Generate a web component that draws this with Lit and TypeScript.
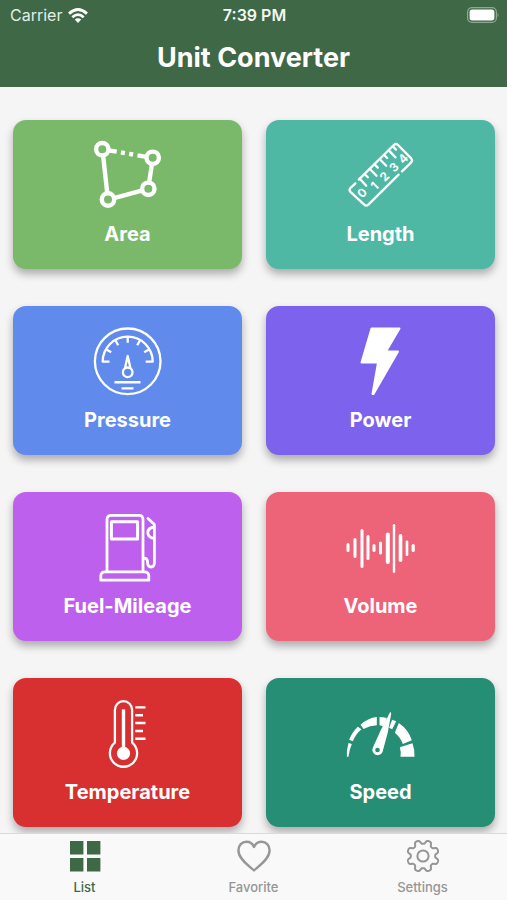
import { LitElement, html, css, svg } from "lit";
import type { SVGTemplateResult } from "lit";
import { customElement, property, state } from "lit/decorators.js";
import { classMap } from "lit/directives/class-map.js";

type Unit = { id: string; label: string; icon: SVGTemplateResult };

// Sound-wave bars: centre x, top, bottom, width.
const bars = [
  [1, 30, 39, 3], [8, 25, 45, 3], [15, 16, 55, 3], [21, 22, 47, 3],
  [27, 31, 39, 3], [33.5, 28.5, 41.5, 3], [40.8, 19.5, 51, 4], [47, 11, 60, 2.4],
  [53.5, 21, 49, 3.6], [60, 27.5, 43, 2.6], [66.2, 31, 39, 3.2],
];

const gearPath = (() => {
  const pts: string[] = [];
  for (let i = 0; i < 160; i++) {
    const a = (i / 160) * Math.PI * 2;
    const r = 14 + 2 * Math.tanh(1.8 * (0.1 - Math.cos(8 * a)));
    pts.push(`${(17 + r * Math.sin(a)).toFixed(2)} ${(17 - r * Math.cos(a)).toFixed(2)}`);
  }
  return `M${pts.join("L")}Z`;
})();

const gaugeTicks = [30, 60, 90, 120, 150].map((d) => {
  const a = (d * Math.PI) / 180;
  const at = (r: number) => `${(33.7 - r * Math.cos(a)).toFixed(1)} ${(34.7 - r * Math.sin(a)).toFixed(1)}`;
  return `M${at(25)}L${at(19)}`;
}).join("");

const units: Unit[] = [
  {
    id: "area", label: "Area",
    icon: svg`<g fill="none" stroke="#fff" stroke-width="4.4">
      <circle cx="8.3" cy="8.2" r="6.2"/><circle cx="58.700" cy="16.8" r="6.2"/>
      <circle cx="54.3" cy="47.8" r="6.2"/><circle cx="14" cy="58.5" r="6.2"/>
      <path d="M9.1 14.500L13.300 52.500M58 23L55.100 41.500M20 57.100L48.500 49.300"/>
      <path d="M14.500 9.300L22.700 10.700M26.900 11.400L30.900 12.100M35.100 12.800L39.100 13.500M43.500 14.300L52.500 15.800"/></g>`,
  },
  {
    id: "length", label: "Length",
    icon: svg`<g fill="none" stroke="#fff" stroke-width="2.3" stroke-linecap="round" stroke-linejoin="round">
      <path d="M11.8 38.6L46.8 4Q49 2 51 4L64.2 17.4Q66 19.6 64 21.6L55 30.4M51.6 33.6L21.4 63.6Q19.2 65.6 17.2 63.6L3.4 50.8Q1.6 48.8 3.6 46.8L8.4 42.4"/>
      <path d="M12.8 37.8L19.2 44.7M22.8 28L29.5 34.7M32.8 18.2L39.2 24.7M41.8 9.4L48.5 16.4"/>
      <path d="M17.6 33L20.8 36.2M27.6 23.4L30.8 26.6M37.2 14L40.2 17M46 5.4L49 8.6"/></g>
      <g class="digits" fill="#fff" text-anchor="middle">
      <text transform="translate(18 55) rotate(-45)">0</text>
      <text transform="translate(30.6 48) rotate(-45)">1</text>
      <text transform="translate(40.4 38.600) rotate(-45)">2</text>
      <text transform="translate(50 29.2) rotate(-45)">3</text>
      <text transform="translate(59 20.6) rotate(-45)">4</text></g>`,
  },
  {
    id: "pressure", label: "Pressure",
    icon: svg`<g fill="none" stroke="#fff" stroke-width="2.3" stroke-linejoin="round">
      <circle cx="33.7" cy="34.3" r="32.8"/>
      <path d="M15.500 34.7H8.700A25 25 0 0 1 58.700 34.7H51.700"/><path d="${gaugeTicks}"/>
      <circle cx="33.7" cy="45.3" r="4.8"/><path d="M31 41L33.700 29L36.400 41"/>
      <path d="M20.500 55.3H46.500M27.500 61.4H39.500" stroke-width="2.4"/></g>`,
  },
  {
    id: "power", label: "Power",
    icon: svg`<path fill="#fff" stroke="#fff" stroke-width="2" stroke-linejoin="round"
      d="M24.500 1.6H52.500L39 24.600H51L26.500 67H25.500L31 35.600H14.500Z"/>`,
  },
  {
    id: "fuel", label: "Fuel-Mileage",
    icon: svg`<g fill="none" stroke="#fff" stroke-width="2.8" stroke-linejoin="round" stroke-linecap="round">
      <path d="M13 58V6.6Q13 2.4 17.2 2.4H45Q49 2.4 49 6.6V58"/>
      <path d="M17.4 8.8H43.6V26H17.4Z" stroke-width="3"/>
      <path d="M6.8 67.2V63Q6.8 58.8 11.2 58.8H50.2Q54.8 58.8 54.8 63V67.2Z"/>
      <path d="M54 5.4L60.4 11.4V49.6Q60.4 54 57 54Q53.600 54 53.600 49.6Q53.600 45.2 50 45.2"/>
      <path d="M60 14Q53.800 15 53.800 19.6Q53.800 24.6 60 25.4"/></g>`,
  },
  {
    id: "volume", label: "Volume",
    icon: svg`${bars.map(([x, top, bottom, w]) => svg`<rect x=${x - w / 2} y=${top} width=${w}
      height=${bottom - top} rx=${w / 2} fill="#fff"/>`)}`,
  },
  {
    id: "temperature", label: "Temperature",
    icon: svg`<g fill="none" stroke="#fff" stroke-width="2.3" stroke-linejoin="round">
      <path d="M20.900 43.6V11A8.5 8.8 0 0 1 38.100 11V43.6A13.6 13.6 0 1 1 20.900 43.6Z"/>
      <path d="M29.500 10.4V52" stroke-width="3.4"/><circle cx="29.5" cy="54.4" r="6.6" fill="#fff" stroke="none"/>
      <path d="M41.3 8.4H51.500M41.3 16.2H49M41.3 24H51.500M41.3 32H49M41.3 39.8H51.500" stroke-width="2.4"/></g>`,
  },
  {
    id: "speed", label: "Speed",
    icon: svg`<g fill="#fff" transform="translate(-6.5 1) scale(.3333)">
      <path d="M19 170Q18 148 24 129L34 132Q26 150 24 170Z"/>
      <path d="M26 119Q35 96 52 80L63 88Q46 102 37 124Z"/>
      <path d="M60 74Q82 54 109 51V76Q88 77 69 87Z"/>
      <path d="M117 51Q128 51 139 54L129 79L117 76Z"/>
      <path d="M155 59L167 64L155 88L146 83Z"/>
      <path d="M175 69Q204 89 214 121L187 132Q180 112 163 98Z"/>
      <path d="M216 130Q223 150 222 170H180Q182 154 178 142Z"/>
      <path fill-rule="evenodd" d="M150 36Q152 38 152 42Q144 100 126 156A15.500 15.500 0 1 1 97 143Q120 88 148 38ZM111 143A7 7 0 1 0 111 157A7 7 0 1 0 111 143Z"/></g>`,
  },
];

const tabs = [
  {
    id: "list", label: "List",
    icon: svg`<path fill="currentColor" d="M2 2H15.400V15.400H2ZM19 2H32.400V15.400H19ZM2 19H15.400V32.400H2ZM19 19H32.400V32.400H19Z"/>`,
  },
  {
    id: "favorite", label: "Favorite",
    icon: svg`<path fill="none" stroke="currentColor" stroke-width="2.4" stroke-linejoin="round"
      d="M17 31.400C12 27 1.400 20 1.400 11.200C1.400 6.200 5 2.800 9.400 2.800C12.800 2.800 15.600 4.800 17 8C18.400 4.800 21.200 2.800 24.600 2.800C29 2.800 32.600 6.200 32.600 11.200C32.600 20 22 27 17 31.400Z"/>`,
  },
  {
    id: "settings", label: "Settings",
    icon: svg`<g fill="none" stroke="currentColor" stroke-width="2" stroke-linejoin="round">
      <path d=${gearPath}/><circle cx="17" cy="17" r="5.600"/></g>`,
  },
];

@customElement("unit-card")
class UnitCard extends LitElement {
  @property({ attribute: false }) unit!: Unit;

  static styles = css`
    :host { display: block; }
    .card {
      box-sizing: border-box;
      display: flex;
      flex-direction: column;
      align-items: center;
      gap: 11px;
      width: 100%;
      height: 149px;
      padding: 21px 8px 0;
      border: 0;
      border-radius: 13px;
      color: #fff;
      font: 700 20px/28px Inter, "Liberation Sans", sans-serif;
      box-shadow: 0 5px 8px rgba(0, 0, 0, 0.3);
      cursor: pointer;
    }
    .icon { display: block; width: 68px; height: 68px; flex: none; overflow: visible; }
    .digits { font: 700 12px Inter, sans-serif; }
    .area { background: #7bb96a; }
    .length { background: #4eb8a5; }
    .pressure { background: #608bed; }
    .power { background: #7c62ec; }
    .fuel { background: #be60ee; }
    .volume { background: #ed6378; }
    .temperature { background: #d83030; }
    .speed { background: #268e75; }
  `;

  render() {
    return html`<button type="button" class=${classMap({ card: true, [this.unit.id]: true })}>
      <svg class="icon" viewBox="0 0 68 68" aria-hidden="true">${this.unit.icon}</svg>
      <span>${this.unit.label}</span>
    </button>`;
  }
}

@customElement("app-root")
class AppRoot extends LitElement {
  @state() private active = "list";

  static styles = css`
    :host {
      display: flex;
      flex-direction: column;
      height: 100vh;
      background: #f5f5f5;
      font-family: Inter, "Liberation Sans", sans-serif;
    }
    .header { flex: none; background: #3f6847; color: #fff; }
    .status {
      display: grid;
      grid-template-columns: 1fr auto 1fr;
      align-items: center;
      height: 30px;
      padding: 0 8px 0 10px;
      font-size: 16px;
      line-height: 20px;
    }
    .carrier { display: flex; align-items: center; gap: 6px; color: #e4eee5; }
    .time { font-weight: 600; color: #f2f8f2; }
    .battery { justify-self: end; }
    .title {
      margin: 0;
      padding: 11px 0 12px;
      text-align: center;
      font-size: 27px;
      font-weight: 700;
      line-height: 34px;
    }
    .content { flex: 1; min-height: 0; overflow-y: auto; scrollbar-width: none; }
    .grid {
      display: grid;
      grid-template-columns: 1fr 1fr;
      gap: 37px 24px;
      padding: 33px 12px 32px 13px;
    }
    .tabs {
      flex: none;
      display: grid;
      grid-template-columns: repeat(3, 1fr);
      background: #f9f9f9;
      border-top: 1px solid #d9dad9;
    }
    .tab {
      display: flex;
      flex-direction: column;
      align-items: center;
      gap: 5px;
      height: 66px;
      padding: 5px 0 0;
      border: 0;
      background: none;
      color: #969696;
      font: 500 13px/18px Inter, "Liberation Sans", sans-serif;
      cursor: pointer;
    }
    .tab svg { display: block; width: 34px; height: 34px; }
    .active { color: #3f6847; }
  `;

  render() {
    return html`
      <header class="header">
        <div class="status">
          <span class="carrier">Carrier
            <svg width="20" height="15" viewBox="0 0 20 15" aria-hidden="true">
              <g fill="none" stroke="#fff" stroke-width="2.8">
                <path d="M1 5.600Q10 -2.600 19 5.600"/><path d="M4.300 9.200Q10 4 15.700 9.200"/>
              </g>
              <path fill="#fff" d="M6.800 11.600Q10 8.800 13.200 11.600L10 15Z"/>
            </svg>
          </span>
          <span class="time">7:39 PM</span>
          <svg class="battery" width="32" height="16" viewBox="0 0 32 16" aria-hidden="true">
            <rect x=".6" y=".6" width="28.800" height="14.800" rx="4.400" fill="none" stroke="#8fa893" stroke-width="1.200"/>
            <rect x="2.600" y="2.600" width="24.800" height="10.800" rx="2.600" fill="#fff"/>
            <path fill="#8fa893" d="M30.600 5.500Q32.400 8 30.600 10.500Z"/>
          </svg>
        </div>
        <h1 class="title">Unit Converter</h1>
      </header>
      <main class="content">
        <div class="grid">${units.map((u) => html`<unit-card .unit=${u}></unit-card>`)}</div>
      </main>
      <nav class="tabs">
        ${tabs.map((t) => html`<button type="button"
          class=${classMap({ tab: true, active: this.active === t.id })}
          @click=${() => (this.active = t.id)}>
          <svg viewBox="0 0 34 34" aria-hidden="true">${t.icon}</svg>
          <span>${t.label}</span>
        </button>`)}
      </nav>`;
  }
}
